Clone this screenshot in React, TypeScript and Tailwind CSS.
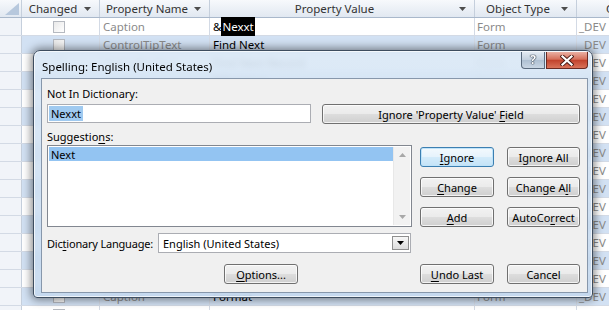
import React from 'react';

type Row = { name: string; value: string; type: string; obj: string };

const rows: Row[] = [
    { name: 'Caption', value: '&Nexxt', type: 'Form', obj: '_DEV' },
    { name: 'ControlTipText', value: 'Find Next', type: 'Form', obj: '_DEV' },
    { name: 'StatusBarText', value: 'Find Next Record', type: 'Form', obj: '_DEV' },
    { name: 'Caption', value: '&Previous', type: 'Form', obj: '_DEV' },
    { name: 'ControlTipText', value: 'Find Previous', type: 'Form', obj: '_DEV' },
    { name: 'Caption', value: 'Match &Case', type: 'Form', obj: '_DEV' },
    { name: 'Caption', value: 'Find What:', type: 'Form', obj: '_DEV' },
    { name: 'ControlTipText', value: 'Search text', type: 'Form', obj: '_DEV' },
    { name: 'Caption', value: '&Close', type: 'Form', obj: '_DEV' },
    { name: 'Caption', value: 'Look In:', type: 'Form', obj: '_DEV' },
    { name: 'ValidationText', value: 'Enter a value', type: 'Form', obj: '_DEV' },
    { name: 'Caption', value: '&Replace', type: 'Form', obj: '_DEV' },
    { name: 'ControlTipText', value: 'Replace All', type: 'Form', obj: '_DEV' },
    { name: 'Caption', value: 'Whole Word', type: 'Form', obj: '_DEV' },
    { name: 'StatusBarText', value: 'Search Up', type: 'Form', obj: '_DEV' },
    { name: 'Caption', value: 'Format', type: 'Form', obj: '_DEV' },
    { name: 'Caption', value: 'Search', type: 'Form', obj: '_DEV' },
];

const SortArrow = () => (
    <svg width="7" height="4" viewBox="0 0 7 4" className="shrink-0">
        <path d="M0 0 H7 L3.5 4 Z" fill="#4d4d4d" />
    </svg>
);

const HeaderCell = ({ label, width }: { label: string; width: string }) => (
    <div className={`${width} h-full shrink-0 flex items-center border-r border-[#c5cfdc] pr-[8px]`}>
        <span className="flex-1 text-center text-[#333]">{label}</span>
        <SortArrow />
    </div>
);

const Check = () => (
    <div className="w-[12px] h-[12px] border border-[#b5b9c0] bg-[linear-gradient(135deg,#e9e9e9,#ffffff)]" />
);

// underlined access key
const K = ({ children }: { children: React.ReactNode }) => <span className="underline underline-offset-[2px]">{children}</span>;

const WinButton = ({
    children,
    className = '',
    isDefault = false,
}: {
    children: React.ReactNode;
    className?: string;
    isDefault?: boolean;
}) => (
    <div
        className={`h-[20px] shrink-0 rounded-[3px] border flex items-center justify-center text-black ${
            isDefault
                ? 'border-[#3c7fb1] bg-[linear-gradient(to_bottom,#f3f9fd_0%,#e6f3fc_48%,#d3ebfa_52%,#c4e3f7_100%)] shadow-[inset_0_0_0_1px_#bfe3f9]'
                : 'border-[#707070] bg-[linear-gradient(to_bottom,#f2f2f2_0%,#ebebeb_48%,#dddddd_52%,#cfcfcf_100%)] shadow-[inset_0_0_0_1px_rgba(255,255,255,0.75)]'
        } ${className}`}
    >
        <span className="whitespace-pre">{children}</span>
    </div>
);

const Datasheet = () => (
    <div className="w-[609px] h-[310px] overflow-hidden bg-white font-['Noto_Sans',sans-serif] text-[11.5px] leading-none">
        {/* header */}
        <div className="flex h-[18px] border-b border-[#a9b8cb] bg-[linear-gradient(to_bottom,#f7f9fc,#e1e8f1)]">
            <div className="w-[22px] h-full shrink-0 border-r border-[#c5cfdc] flex items-end justify-end p-[2px]">
                <svg width="14" height="12" viewBox="0 0 14 12">
                    <path d="M0 12 L14 12 L14 0 Z" fill="#b7c8dd" />
                </svg>
            </div>
            <HeaderCell label="Changed" width="w-[78px]" />
            <HeaderCell label="Property Name" width="w-[110px]" />
            <HeaderCell label="Property Value" width="w-[265px]" />
            <HeaderCell label="Object Type" width="w-[102px]" />
            <div className="w-[120px] h-full shrink-0 flex items-center pl-[29px] text-[#333]">Container</div>
        </div>
        {rows.map((r, i) => (
            <div
                key={i}
                className={`flex h-[18px] border-b border-[#d3dae5] ${i % 2 === 1 ? 'bg-[#d2e1f3]' : 'bg-white'}`}
            >
                <div className="w-[22px] shrink-0 border-r border-[#c5cfdc] bg-[#f1f4f9]" />
                <div className="w-[78px] shrink-0 border-r border-[#d3dae5] flex items-center justify-center pr-[4px]">
                    <Check />
                </div>
                <div className="w-[110px] shrink-0 border-r border-[#d3dae5] flex items-center pl-[3px] text-[#8a8a8a] whitespace-nowrap overflow-hidden">
                    {r.name}
                </div>
                <div className="w-[265px] shrink-0 border-r border-[#d3dae5] flex items-center pl-[3px] text-black whitespace-nowrap">
                    {i === 0 ? (
                        <span>
                            &amp;<span className="bg-black text-white px-px py-[2px]">Nexxt</span>
                        </span>
                    ) : (
                        r.value
                    )}
                </div>
                <div className="w-[102px] shrink-0 border-r border-[#d3dae5] flex items-center pl-[2px] text-[#8a8a8a]">
                    {r.type}
                </div>
                <div className="flex-1 flex items-center pl-[2px] text-[#8a8a8a]">{r.obj}</div>
            </div>
        ))}
    </div>
);

const SpellingDialog = () => (
    <div className="absolute left-[33px] top-[50px] w-[560px] h-[248px] rounded-t-[7px] rounded-b-[4px] border border-[#3e4d5f] bg-[linear-gradient(to_bottom,rgba(218,232,246,0.9),rgba(196,216,238,0.9))] backdrop-blur-[3px] shadow-[0_0_9px_2px_rgba(0,0,0,0.45),inset_0_0_0_1px_rgba(255,255,255,0.7)] flex flex-col pl-[7px] pr-[4px] pb-[4px] font-['Noto_Sans',sans-serif] text-[11px] leading-none text-black">
        {/* title bar */}
        <div className="relative h-[27px] shrink-0 flex items-center pt-[4px] pl-[1px] text-[11.5px]">
            <span>Spelling: English (United States)</span>
            <div className="absolute top-[1px] right-0 flex gap-px">
                <div className="w-[24px] h-[17px] rounded-bl-[4px] border border-[#5a6a7d] border-t-0 bg-[linear-gradient(to_bottom,#e3eaf2,#c2cfdd_50%,#aebfd1_51%,#c9d6e4)] flex items-center justify-center">
                    <span className="text-white font-bold text-[12px] [text-shadow:0_0_1px_#1e2b3a,0_0_1px_#1e2b3a,0_0_1px_#1e2b3a]">?</span>
                </div>
                <div className="w-[42px] h-[17px] rounded-br-[4px] border border-[#6b2a22] border-t-0 bg-[linear-gradient(to_bottom,#eab0a3,#d5705b_45%,#c2432d_52%,#d9735a)] flex items-center justify-center">
                    <svg width="14" height="11" viewBox="0 0 14 11">
                        <path d="M2.5 1.5 L11.5 9.5 M11.5 1.5 L2.5 9.5" stroke="#4a1c16" strokeWidth="4" strokeLinecap="square" />
                        <path d="M2.5 1.5 L11.5 9.5 M11.5 1.5 L2.5 9.5" stroke="#ffffff" strokeWidth="2.2" strokeLinecap="square" />
                    </svg>
                </div>
            </div>
        </div>

        {/* client area */}
        <div className="flex-1 flex flex-col border border-[#8797ab] bg-[#f0f0f0] pl-[5px] pr-[7px]">
            <div className="mt-[7px] h-[15px] flex items-center">
                <span>Not In Dictionary:</span>
            </div>
            <div className="mt-[3px] flex items-start gap-[11px]">
                <div className="w-[264px] h-[19px] border border-[#abadb3] bg-white flex items-center pl-[1px]">
                    <span className="bg-[#a0caf0] px-[2px] py-[2px]">Nexxt</span>
                </div>
                <WinButton className="w-[258px]">
                    Ignore 'Property Value' <K>F</K>ield
                </WinButton>
            </div>

            <div className="mt-[5px] h-[15px] flex items-center">
                <span>
                    Suggestio<K>n</K>s:
                </span>
            </div>
            <div className="mt-[1px] flex items-start gap-[8px]">
                <div className="w-[365px] h-[82px] border border-[#828790] bg-white flex p-px">
                    <div className="flex-1">
                        <div className="h-[14px] bg-[#93c4f2] flex items-center pl-[2px]">
                            <span>Next</span>
                        </div>
                    </div>
                    <div className="w-[17px] flex flex-col items-center justify-between bg-[#f2f2f2] border-l border-[#e8e8e8] py-[6px]">
                        <svg width="7" height="4" viewBox="0 0 7 4">
                            <path d="M0 4 L3.5 0 L7 4 Z" fill="#a8a8a8" />
                        </svg>
                        <svg width="7" height="4" viewBox="0 0 7 4">
                            <path d="M0 0 H7 L3.5 4 Z" fill="#a8a8a8" />
                        </svg>
                    </div>
                </div>
                <div className="mt-[2px] grid grid-cols-[74px_73px] gap-x-[13px] gap-y-[10px]">
                    <WinButton isDefault>
                        <K>I</K>gnore
                    </WinButton>
                    <WinButton>
                        I<K>g</K>nore All
                    </WinButton>
                    <WinButton>
                        <K>C</K>hange
                    </WinButton>
                    <WinButton>
                        Change A<K>l</K>l
                    </WinButton>
                    <WinButton>
                        <K>A</K>dd
                    </WinButton>
                    <WinButton>
                        AutoCo<K>r</K>rect
                    </WinButton>
                </div>
            </div>

            <div className="mt-[6px] flex items-center">
                <div className="w-[111px] shrink-0 tracking-[-0.2px] whitespace-nowrap">
                    Dic<K>t</K>ionary Language:
                </div>
                <div className="w-[253px] h-[20px] border border-[#abadb3] bg-white flex items-center pl-[4px] pr-[1px]">
                    <span className="flex-1">English (United States)</span>
                    <div className="w-[17px] h-[14px] border border-[#8f8f8f] bg-[linear-gradient(to_bottom,#f7f7f7,#dcdcdc)] flex items-center justify-center">
                        <svg width="7" height="4" viewBox="0 0 7 4">
                            <path d="M0 0 H7 L3.5 4 Z" fill="#000" />
                        </svg>
                    </div>
                </div>
            </div>

            <div className="mt-[11px] flex">
                <WinButton className="w-[74px] ml-[177px]">
                    <K>O</K>ptions...
                </WinButton>
                <WinButton className="w-[74px] ml-[122px]">
                    <K>U</K>ndo Last
                </WinButton>
                <WinButton className="w-[73px] ml-[13px]">Cancel</WinButton>
            </div>
        </div>
    </div>
);

export default function App() {
    return (
        <div className="relative w-[609px] h-[310px] overflow-hidden">
            <Datasheet />
            <SpellingDialog />
        </div>
    );
}
